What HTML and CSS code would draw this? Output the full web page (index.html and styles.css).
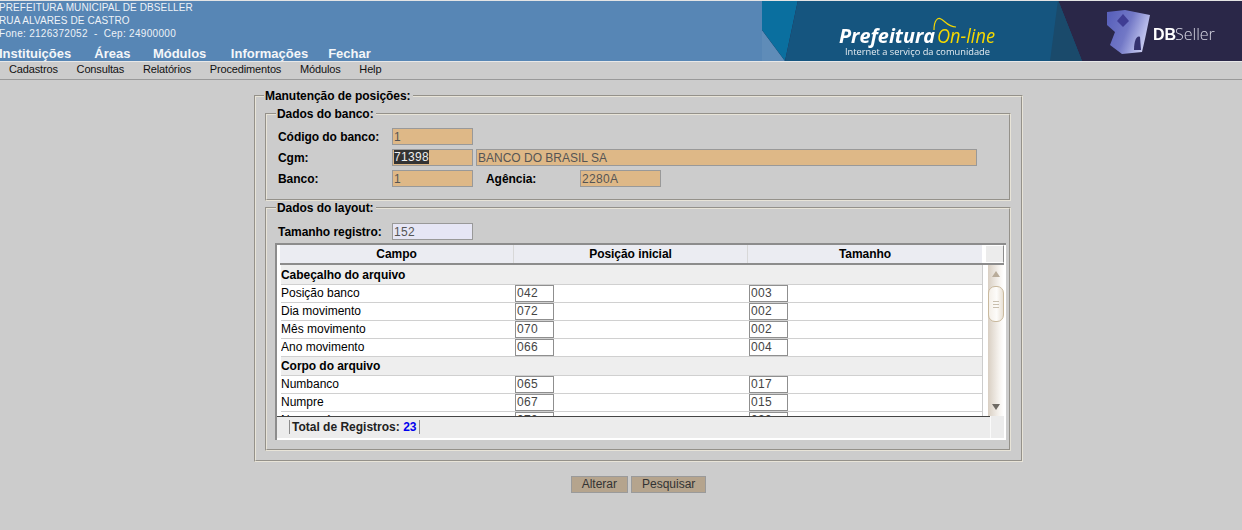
FILE: index.html
```html
<!DOCTYPE html>
<html>

<head>
    <meta charset="utf-8">
    <link rel="stylesheet" href="styles.css">
    <title>Manutenção de posições</title>
</head>

<body>
    <div id="topo">
        <div id="topoesq">
            <div class="instit um">PREFEITURA MUNICIPAL DE DBSELLER</div>
            <div class="instit um">RUA ALVARES DE CASTRO</div>
            <div class="instit fone">Fone: 2126372052 &nbsp;-&nbsp; Cep: 24900000</div>
            <div id="navtopo">
                <span>Instituições</span>
                <span>Áreas</span>
                <span class="modulos">Módulos</span>
                <span class="informacoes">Informações</span>
                <span class="fechar">Fechar</span>
            </div>
        </div>
        <svg id="banner" width="480" height="61" viewBox="0 0 480 61">
            <defs>
                <linearGradient id="cubo" x1="0" y1="0.3" x2="1" y2="0.7">
                    <stop offset="0" stop-color="#5a62bc"/>
                    <stop offset="0.45" stop-color="#7278c6"/>
                    <stop offset="0.8" stop-color="#b4b8e8"/>
                    <stop offset="1" stop-color="#d4d6f2"/>
                </linearGradient>
            </defs>
            <rect width="480" height="61" fill="#2a2748"/>
            <polygon points="0,30 23,61 0,61" fill="#5f8cb8"/>
            <polygon points="0,0 36,0 23,61 0,30" fill="#0a6f9f"/>
            <polygon points="36,0 296,0 320,61 23,61" fill="#15557f"/>
            <polygon points="296,0 320,61 288,61" fill="#1a4a6b"/>
            <polygon points="345,12 363,10 388,15 383,39 380,52 360,54 348,45 353,32 345,25" fill="url(#cubo)"/>
            <polygon points="361,14 367,21 361,27 355,21" fill="#3f3d94"/>
            <path d="M372 50 C372 40 375 35 378 37 L379 50 Z" fill="#34326f"/>
            <text x="77" y="43" class="ban-pref" textLength="96" lengthAdjust="spacingAndGlyphs">Prefeitura</text>
            <text x="175" y="43" class="ban-online" textLength="58" lengthAdjust="spacingAndGlyphs">On-line</text>
            <path d="M172 30 C172 20 176 17 179 19 C183 21 186 27 194 27" fill="none" stroke="#f5d800" stroke-width="1.2"/>
            <text x="83" y="55" class="ban-sub" textLength="145" lengthAdjust="spacingAndGlyphs">Internet a serviço da comunidade</text>
            <text x="391" y="40" class="ban-db">DB</text>
            <text x="413" y="40" class="ban-seller">Seller</text>
        </svg>
    </div>

    <div id="menu">
        <span>Cadastros</span>
        <span>Consultas</span>
        <span>Relatórios</span>
        <span>Procedimentos</span>
        <span>Módulos</span>
        <span>Help</span>
    </div>

    <form id="corpo">
        <fieldset class="quadro externo">
            <legend>Manutenção de posições:</legend>

            <fieldset class="quadro banco">
                <legend>Dados do banco:</legend>
                <div class="linha">
                    <label class="rotulo">Código do banco:</label>
                    <input class="campo ro digitos" value="1" readonly>
                </div>
                <div class="linha">
                    <label class="rotulo">Cgm:</label>
                    <div class="campo ro selec digitos"><span>71398</span></div>
                    <input class="campo ro nome" value="BANCO DO BRASIL SA" readonly>
                </div>
                <div class="linha">
                    <label class="rotulo">Banco:</label>
                    <input class="campo ro digitos" value="1" readonly>
                    <label class="rotulo agencia">Agência:</label>
                    <input class="campo ro digitos" value="2280A" readonly>
                </div>
            </fieldset>

            <fieldset class="quadro layout">
                <legend>Dados do layout:</legend>
                <div class="linha">
                    <label class="rotulo">Tamanho registro:</label>
                    <input class="campo lilas digitos" value="152" readonly>
                </div>

                <div id="grid">
                    <div id="gridhead">
                        <div class="hcol">Campo</div>
                        <div class="hcol">Posição inicial</div>
                        <div class="hcol">Tamanho</div>
                        <div class="hcanto"></div>
                    </div>
                    <div id="gridmeio">
                        <div id="gridbody">
                            <div class="grupo primeiro">Cabeçalho do arquivo</div>
                            <div class="reg"><div>Posição banco</div><div><input class="num" value="042"></div><div><input class="num" value="003"></div></div>
                            <div class="reg"><div>Dia movimento</div><div><input class="num" value="072"></div><div><input class="num" value="002"></div></div>
                            <div class="reg"><div>Mês movimento</div><div><input class="num" value="070"></div><div><input class="num" value="002"></div></div>
                            <div class="reg"><div>Ano movimento</div><div><input class="num" value="066"></div><div><input class="num" value="004"></div></div>
                            <div class="grupo">Corpo do arquivo</div>
                            <div class="reg"><div>Numbanco</div><div><input class="num" value="065"></div><div><input class="num" value="017"></div></div>
                            <div class="reg"><div>Numpre</div><div><input class="num" value="067"></div><div><input class="num" value="015"></div></div>
                            <div class="reg"><div>Nosso número</div><div><input class="num" value="070"></div><div><input class="num" value="020"></div></div>
                        </div>
                        <div id="barra">
                            <div class="seta">
                                <svg width="8" height="8" viewBox="0 0 8 8"><polygon points="4,1 8,7 0,7" fill="#b9ac9a"/></svg>
                            </div>
                            <div id="polegar"><i></i><i></i><i></i></div>
                            <div class="trilho"></div>
                            <div class="seta">
                                <svg width="8" height="8" viewBox="0 0 8 8"><polygon points="0,1 8,1 4,7" fill="#6e6a64"/></svg>
                            </div>
                        </div>
                    </div>
                    <div id="gridfoot">
                        <div id="rodape">
                            <div id="total">Total de Registros: <b>23</b></div>
                        </div>
                        <div id="rodcanto"></div>
                    </div>
                </div>
            </fieldset>
        </fieldset>

        <div id="botoes">
            <button type="button" class="botao">Alterar</button>
            <button type="button" class="botao">Pesquisar</button>
        </div>
    </form>
</body>

</html>
```

FILE: styles.css
```css
html, body {
    margin: 0;
    padding: 0;
    height: 100%;
    overflow: hidden;
}

body {
    background-color: #cccccc;
    font-family: "Liberation Sans", Arial, sans-serif;
    font-size: 12px;
    color: #000;
}

/* topo */
#topo {
    box-sizing: border-box;
    display: flex;
    justify-content: space-between;
    height: 61px;
    border-top: 1px solid #e4e4e4;
    background-color: #5786b5;
    overflow: hidden;
}

#topoesq {
    color: #fff;
    margin-left: -1px;
}

.instit {
    font-size: 10px;
    line-height: 13px;
    height: 13px;
    color: #eef2f7;
}

.um {
    letter-spacing: 0.1px;
}

.fone {
    letter-spacing: 0.3px;
}

#navtopo {
    display: flex;
    gap: 23px;
    margin-top: 6px;
    font-size: 13px;
    font-weight: bold;
    line-height: 16px;
    color: #f4f6f9;
}

.modulos {
    margin-left: -0.5px;
}

.informacoes {
    margin-left: 1.5px;
}

.fechar {
    margin-left: -3px;
}

#banner {
    flex: none;
    display: block;
    margin-top: -1px;
    filter: blur(0.3px);
}

.ban-pref {
    font-family: "Open Sans", sans-serif;
    font-size: 20px;
    font-weight: bold;
    font-style: italic;
    fill: #fff;
}

.ban-online {
    font-family: "Open Sans", sans-serif;
    font-size: 20px;
    font-style: italic;
    font-weight: 400;
    fill: #f5d800;
}

.ban-sub {
    font-family: "Open Sans", sans-serif;
    font-size: 9px;
    fill: #e6edf2;
}

.ban-db {
    font-family: "Liberation Sans", sans-serif;
    font-size: 16px;
    font-weight: bold;
    fill: #fff;
}

.ban-seller {
    font-family: "Open Sans", sans-serif;
    font-size: 16px;
    font-weight: 300;
    fill: #d8d8e4;
}

/* menu */
#menu {
    display: flex;
    gap: 18.8px;
    height: 17px;
    padding-left: 9px;
    line-height: 15px;
    font-size: 11px;
    letter-spacing: -0.15px;
    color: #111;
    background-color: #cccccc;
    border-bottom: 1px solid #999;
    border-top: 1px solid #e8e8e8;
}

/* formulario */
#corpo {
    margin: 9px 0 0 254px;
    width: 769px;
}

.quadro {
    margin: 0;
    min-width: 0;
    box-sizing: border-box;
    border: 2px groove #e8e4d8;
}

.quadro legend {
    padding: 0 2px 0 1px;
    font-weight: bold;
    font-size: 12px;
    line-height: 14px;
    letter-spacing: -0.05px;
}

.externo {
    height: 373px;
    padding: 4px 10px 0 8px;
}

.banco {
    height: 94px;
    margin-left: 1px;
    padding: 5px 0 0 9px;
}

.layout {
    height: 250px;
    margin-left: 1px;
    padding: 6px 0 0 9px;
}

.linha {
    display: flex;
    align-items: center;
    height: 21px;
}

.rotulo {
    width: 114px;
    padding-left: 2px;
    flex: none;
    font-weight: bold;
    letter-spacing: -0.05px;
}

.agencia {
    box-sizing: border-box;
    width: 94px;
    padding-left: 0;
    margin-left: 13px;
}

.campo {
    box-sizing: border-box;
    width: 81px;
    height: 17px;
    flex: none;
    margin: 0;
    padding: 0 1px;
    border: 1px solid #999;
    outline: none;
    font-family: "Liberation Sans", Arial, sans-serif;
    font-size: 12px;
    line-height: 15px;
    color: #555;
}

.digitos {
    letter-spacing: 0.35px;
}

.ro {
    background-color: #deb887;
}

.lilas {
    background-color: #e6e6f5;
}

.nome {
    width: 501px;
    margin-left: 3px;
}

.selec span {
    background-color: #333;
    color: #eee;
}

/* grid */
#grid {
    box-sizing: border-box;
    width: 731px;
    height: 197px;
    margin: 1px 0 0 -1px;
    padding-left: 3px;
    background-color: #fff;
    border-top: 2px solid #8c8c8c;
    border-left: 2px solid #8c8c8c;
    display: flex;
    flex-direction: column;
    overflow: hidden;
}

#gridhead {
    display: flex;
    flex: none;
    height: 18px;
    margin-right: 2px;
    border-bottom: 2px solid #8c8c8c;
}

.hcol {
    box-sizing: border-box;
    width: 234px;
    text-align: center;
    font-weight: bold;
    line-height: 18px;
    letter-spacing: -0.05px;
    background-color: #ebecf2;
    border-right: 1px solid #d8d8d8;
}

.hcol:nth-child(3) {
    border-right: 0;
    margin-right: 3px;
}

.hcanto {
    box-sizing: border-box;
    width: 19px;
    border: 1px solid #fff;
    border-right-color: #8c8c8c;
    background-color: #ececec;
}

#gridmeio {
    display: flex;
    flex: none;
    height: 151px;
    overflow: hidden;
}

#gridbody {
    width: 701px;
    margin-left: 1px;
    flex: none;
    overflow: hidden;
    border-right: 1px solid #cccccc;
}

.grupo {
    height: 18px;
    line-height: 18px;
    font-weight: bold;
    letter-spacing: -0.05px;
    background-color: #eeeeee;
    border-bottom: 1px solid #d0d0d0;
}

.primeiro {
    padding-top: 1px;
}

.reg {
    display: grid;
    grid-template-columns: 234px 234px 233px;
    height: 17px;
    line-height: 17px;
    border-bottom: 1px solid #d0d0d0;
}

.reg > div:first-child {
    overflow: hidden;
}

.num {
    box-sizing: border-box;
    display: block;
    width: 39px;
    height: 17px;
    margin: 0;
    padding: 0 1px 1px;
    border: 1px solid #8f8f8f;
    font-family: "Liberation Sans", Arial, sans-serif;
    font-size: 12px;
    letter-spacing: 0.35px;
    color: #444;
    background-color: #fff;
}

#barra {
    display: flex;
    flex-direction: column;
    align-items: center;
    width: 16px;
    flex: none;
    margin-left: 5px;
    background: linear-gradient(to right, #d9cfc3, #f6f3ef 70%, #fff);
}

.seta {
    height: 18px;
    display: flex;
    align-items: center;
    justify-content: center;
    flex: none;
}

.trilho {
    flex: 1;
}

#polegar {
    box-sizing: border-box;
    width: 16px;
    height: 36px;
    margin-top: 3px;
    border: 1px solid #c9b99d;
    border-radius: 7px;
    background: linear-gradient(to right, #f4efe8, #fdfcfa 55%, #e8e0d4);
    display: flex;
    flex-direction: column;
    align-items: center;
    justify-content: center;
    gap: 2px;
}

#polegar i {
    display: block;
    width: 6px;
    height: 1px;
    background-color: #c9bfae;
}

#gridfoot {
    display: flex;
    flex: none;
    height: 22px;
    margin: 0 2px 0 -3px;
    background-color: #ececec;
}

#rodape {
    flex: 1;
    display: flex;
    align-items: center;
    padding-left: 12px;
    border-top: 1px solid #444;
}

#rodcanto {
    box-sizing: border-box;
    width: 14px;
    border-left: 1px solid #fafafa;
}

#total {
    height: 14px;
    line-height: 14px;
    margin-bottom: 1px;
    padding: 0 3px 0 2px;
    font-weight: bold;
    color: #222;
    border-left: 1px solid #8c8c8c;
    border-right: 1px solid #8c8c8c;
}

#total b {
    color: #0000ee;
}

#botoes {
    display: flex;
    gap: 3px;
    justify-content: center;
    margin-top: 14px;
}

.botao {
    box-sizing: border-box;
    height: 17px;
    margin: 0;
    padding: 0 10px;
    border: 1px solid #9a9a9a;
    background-color: #b5a48d;
    color: #333;
    font-family: "Liberation Sans", Arial, sans-serif;
    font-size: 12px;
    line-height: 15px;
}
```
